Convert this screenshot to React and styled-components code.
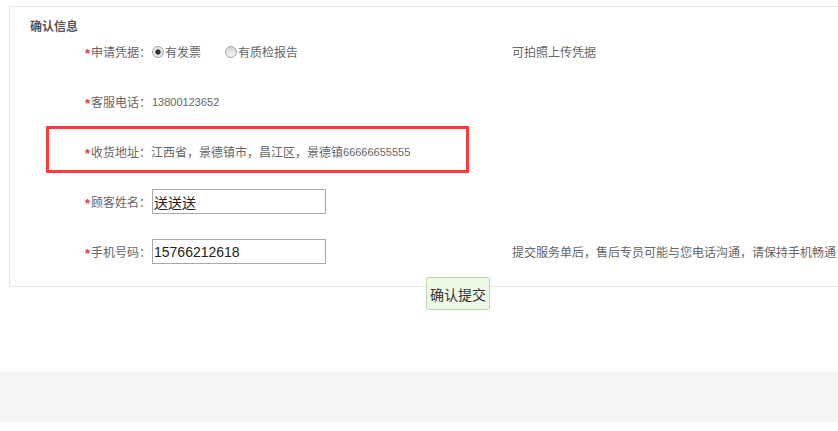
import React from "react";
import styled, { createGlobalStyle } from "styled-components";

const GlobalStyle = createGlobalStyle`
  html, body { margin: 0; padding: 0; background: #fff; }
  body {
    font-family: "Liberation Sans", "Noto Sans CJK SC", sans-serif;
    font-size: 12px;
    color: #666;
  }
  * { box-sizing: border-box; }
`;

const Page = styled.div`
  padding-top: 6px;
  width: 838px;
  overflow: hidden;
`;

const Panel = styled.section`
  margin-left: 9px;
  border: 1px solid #e6e6e6;
  border-right: none;
  padding: 12px 0 22px 0;
`;

const Title = styled.h3`
  margin: 0;
  padding-left: 20px;
  font-size: 12px;
  line-height: 16px;
  font-weight: bold;
  color: #555;
`;

const Form = styled.div`
  margin-top: 4px;
  display: flex;
  flex-direction: column;
  gap: 25px;
`;

const Row = styled.div`
  position: relative;
  display: grid;
  grid-template-columns: 141px 361px auto;
  align-items: center;
  height: 25px;
  white-space: nowrap;
`;

const Label = styled.div`
  text-align: right;
  color: #666;
  font-size: 12px;
`;

const Star = styled.span`
  color: #e4393c;
  font-size: 13px;
  font-weight: bold;
  margin-right: 1px;
  position: relative;
  top: 1px;
  font-family: "Liberation Sans", sans-serif;
`;

const Value = styled.div`
  display: flex;
  align-items: center;
  color: #666;
  font-size: 12px;
  padding-left: ${(p) => (p.$inset ? "1px" : "0")};
`;

const Num = styled.span`
  font-family: "Liberation Sans", sans-serif;
  font-size: 11px;
`;

const Note = styled.div`
  color: #666;
  font-size: 12px;
`;

const RadioOption = styled.label`
  display: inline-flex;
  align-items: center;
  gap: 1px;
  margin-left: ${(p) => (p.$first ? "0" : "24px")};
  color: #666;
`;

const Radio = styled.span`
  display: inline-block;
  width: 12px;
  height: 12px;
  border-radius: 50%;
  border: 1px solid #a2a2a2;
  background: ${(p) =>
    p.$checked
      ? "radial-gradient(circle, #333 0 2.3px, #e2e2e2 3px, #f7f7f7 100%)"
      : "linear-gradient(#d6d6d6, #f5f5f5)"};
`;

const TextInput = styled.input`
  width: 174px;
  height: 25px;
  margin: 0;
  border: 1px solid #a9a9a9;
  padding: 0 1px;
  font-family: "Liberation Sans", "Noto Sans CJK SC", sans-serif;
  font-size: 14px;
  color: #222;
  outline: none;
`;

const Highlight = styled.div`
  position: absolute;
  left: 36px;
  top: -13px;
  width: 423px;
  height: 47px;
  border: 3px solid #fe3a3a;
  pointer-events: none;
`;

const ButtonRow = styled.div`
  padding-left: 426px;
  margin-top: -10px;
  position: relative;
`;

const SubmitButton = styled.button`
  width: 64px;
  height: 33px;
  padding: 0 3px;
  border: 1px solid #bfdaa6;
  border-radius: 2px;
  background: #eef8e7;
  color: #333;
  font-family: "Noto Sans CJK SC", sans-serif;
  font-size: 14px;
  cursor: pointer;
`;

const Footer = styled.div`
  margin-top: 62px;
  height: 50px;
  background: #f4f4f4;
`;

export default function App() {
  return (
    <>
      <GlobalStyle />
      <Page>
        <Panel>
          <Title>确认信息</Title>
          <Form>
            <Row>
              <Label>
                <Star>*</Star>申请凭据：
              </Label>
              <Value $inset>
                <RadioOption $first>
                  <Radio $checked />
                  有发票
                </RadioOption>
                <RadioOption>
                  <Radio />
                  有质检报告
                </RadioOption>
              </Value>
              <Note>可拍照上传凭据</Note>
            </Row>
            <Row>
              <Label>
                <Star>*</Star>客服电话：
              </Label>
              <Value $inset>
                <Num>13800123652</Num>
              </Value>
            </Row>
            <Row>
              <Highlight />
              <Label>
                <Star>*</Star>收货地址：
              </Label>
              <Value>
                江西省，景德镇市，昌江区，景德镇<Num>66666655555</Num>
              </Value>
            </Row>
            <Row>
              <Label>
                <Star>*</Star>顾客姓名：
              </Label>
              <Value $inset>
                <TextInput defaultValue="送送送" />
              </Value>
            </Row>
            <Row>
              <Label>
                <Star>*</Star>手机号码：
              </Label>
              <Value $inset>
                <TextInput defaultValue="15766212618" />
              </Value>
              <Note>提交服务单后，售后专员可能与您电话沟通，请保持手机畅通</Note>
            </Row>
          </Form>
        </Panel>
        <ButtonRow>
          <SubmitButton>确认提交</SubmitButton>
        </ButtonRow>
        <Footer />
      </Page>
    </>
  );
}
